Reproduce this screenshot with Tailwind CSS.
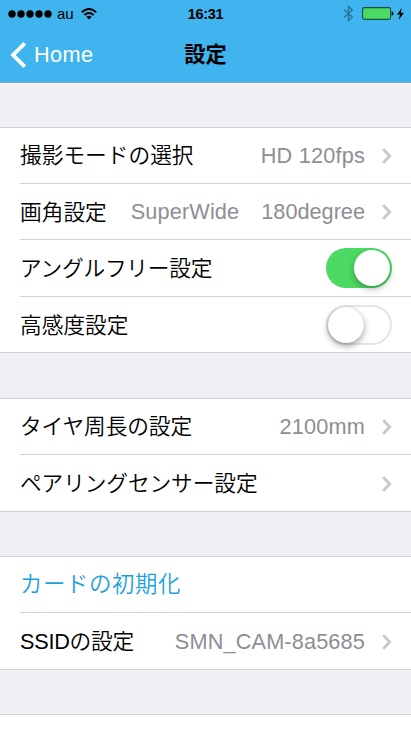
<!DOCTYPE html>
<html lang="ja">
<head>
<meta charset="utf-8">
<title>設定</title>
<script src="https://cdn.jsdelivr.net/npm/@tailwindcss/browser@4"></script>
</head>
<body class="w-[411px] h-[730px] overflow-hidden bg-[#efeff4] text-black font-['Liberation_Sans','Noto_Sans_CJK_JP',sans-serif]">
<svg class="hidden"><symbol id="chev" viewBox="0 0 10 16"><path d="M1.2 1.2 L7.8 8 L1.2 14.8" fill="none" stroke="#c7c7cc" stroke-width="2.7"/></symbol></svg>
<header class="h-[83px] bg-[#40b4ee] border-b border-[#86abc3]">
  <div class="h-[27px] grid grid-cols-3 items-center">
    <div class="flex items-center pl-[8px]">
      <svg class="w-[44px] h-[8px]" viewBox="0 0 44 8"><circle cx="4" cy="4" r="3.7"/><circle cx="13" cy="4" r="3.7"/><circle cx="22" cy="4" r="3.7"/><circle cx="31" cy="4" r="3.7"/><circle cx="40" cy="4" r="3.7"/></svg>
      <span class="ml-[5px] w-[17px] text-[15px] leading-none">au</span>
      <svg class="ml-[7px] w-[16px] h-[12px]" viewBox="0 0 16 12"><g fill="none" stroke="#000" stroke-width="2"><path d="M.8 4.2 Q8 -2.2 15.2 4.2"/><path d="M3.4 7 Q8 2.9 12.6 7"/></g><path d="M5.4 8.9 Q8 6.7 10.6 8.9 L8 11.6Z"/></svg>
    </div>
    <div class="pt-px text-center text-[14.5px] leading-none font-bold tracking-[-0.3px]">16:31</div>
    <div class="flex items-center justify-end pr-[7px]">
      <svg class="w-[11px] h-[17px]" viewBox="0 0 11 17"><path d="M1 4.6 L9.3 12 L5.5 15.6 V1.4 L9.3 5 L1 12.4" fill="none" stroke="#247096" stroke-width="1.3"/></svg>
      <svg class="ml-[8px] w-[32px] h-[13px]" viewBox="0 0 32 13"><rect x=".6" y=".6" width="28" height="11.8" rx="1.8" fill="#4cd964" stroke="#15503e" stroke-width="1.1"/><path d="M29.7 4.3 Q31.5 4.6 31.5 6.5 Q31.5 8.4 29.7 8.7Z"/></svg>
      <svg class="ml-[3px] w-[7px] h-[12px]" viewBox="0 0 7 12"><path d="M4.6 0 L0 6.8 L3 6.6 L1.7 12 L7 4.8 L4 5Z"/></svg>
    </div>
  </div>
  <div class="h-[55px] grid grid-cols-3 items-center">
    <div class="flex items-center pl-[10px] text-white">
      <svg class="w-[17px] h-[26px]" viewBox="0 0 17 26"><path d="M14.8 1.4 L3 13 L14.8 24.6" fill="none" stroke="#fff" stroke-width="3.8"/></svg>
      <span class="ml-[7px] text-[21.7px] leading-none tracking-[0.4px]">Home</span>
    </div>
    <h1 class="text-center text-[21.3px] leading-[26px] font-bold">設定</h1>
  </div>
</header>
<main class="text-[21.7px] leading-[30px] whitespace-nowrap font-[350]">
  <section class="mt-[44px] bg-white border-y border-[#d0d0d5]">
    <div class="ml-[20px] pr-[19px] pt-px h-[56px] border-b border-[#d4d4d8] flex items-center justify-between"><span>撮影モードの選択</span><div class="flex items-center text-[#8e8e93]"><span class="tracking-[0.2px]">HD 120fps</span><svg class="ml-[17px] w-[10px] h-[16px]"><use href="#chev"/></svg></div></div>
    <div class="ml-[20px] pr-[19px] pt-px h-[56px] border-b border-[#d4d4d8] flex items-center justify-between"><span class="pt-px">画角設定</span><div class="flex items-center text-[#8e8e93]"><span class="tracking-[0.15px]">SuperWide</span><span class="ml-[22px]">180degree</span><svg class="ml-[17px] w-[10px] h-[16px]"><use href="#chev"/></svg></div></div>
    <div class="ml-[20px] pr-[19px] h-[57px] border-b border-[#d4d4d8] flex items-center justify-between"><span class="pt-px tracking-[-0.25px]">アングルフリー設定</span><div class="w-[66px] h-[40px] rounded-full bg-[#4cd964] flex items-center justify-end pr-[2px]"><div class="size-[36px] rounded-full bg-white shadow-[0_3px_6px_rgba(0,0,0,0.3)]"></div></div></div>
    <div class="ml-[20px] pr-[19px] h-[55px] flex items-center justify-between"><span class="pt-[2px]">高感度設定</span><div class="w-[66px] h-[40px] rounded-full bg-white border-2 border-[#e5e5e5] flex items-center"><div class="size-[36px] rounded-full bg-white shadow-[0_3px_6px_rgba(0,0,0,0.35),0_0_1px_rgba(0,0,0,0.3)]"></div></div></div>
  </section>
  <section class="mt-[45px] bg-white border-y border-[#d0d0d5]">
    <div class="ml-[20px] pr-[19px] pt-px h-[56px] border-b border-[#d4d4d8] flex items-center justify-between"><span class="tracking-[-0.1px]">タイヤ周長の設定</span><div class="flex items-center text-[#8e8e93]"><span class="tracking-[0.2px]">2100mm</span><svg class="ml-[17px] w-[10px] h-[16px]"><use href="#chev"/></svg></div></div>
    <div class="ml-[20px] pr-[19px] pt-px h-[56px] flex items-center justify-between"><span class="tracking-[-0.1px]">ペアリングセンサー設定</span><svg class="w-[10px] h-[16px]"><use href="#chev"/></svg></div>
  </section>
  <section class="mt-[44px] bg-white border-y border-[#d0d0d5]">
    <div class="ml-[20px] pr-[19px] h-[56px] border-b border-[#d4d4d8] flex items-center text-[#1d9fe0]"><span class="text-[22.4px] tracking-[0.6px]">カードの初期化</span></div>
    <div class="ml-[20px] pr-[19px] pt-px h-[56px] flex items-center justify-between"><span class="tracking-[-0.25px]">SSIDの設定</span><div class="flex items-center text-[#8e8e93]"><span class="tracking-[0.15px]">SMN_CAM-8a5685</span><svg class="ml-[17px] w-[10px] h-[16px]"><use href="#chev"/></svg></div></div>
  </section>
  <section class="mt-[44px] h-[20px] bg-white border-t border-[#d0d0d5]"></section>
</main>
</body>
</html>
